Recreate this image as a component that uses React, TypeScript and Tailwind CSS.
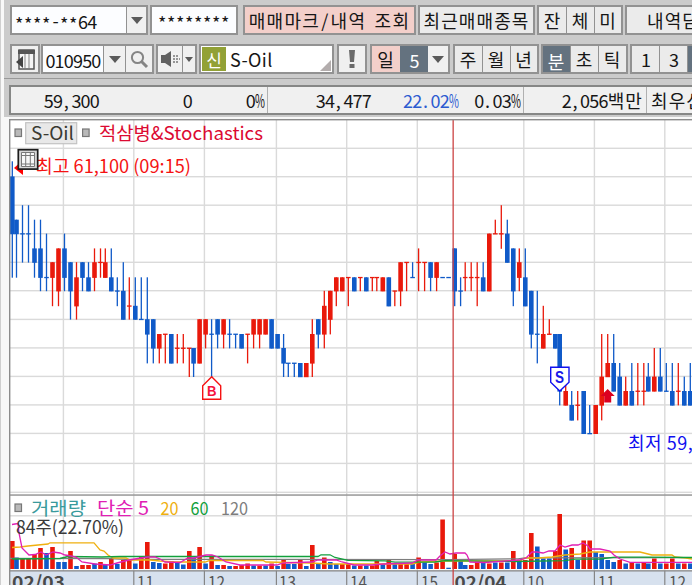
import type { ReactNode } from 'react';

type Tone = 'r' | 'b';

// x, tone, high, body top, body bottom, low (price steps), volume tone, volume height
type Bar = [number, Tone, number, number, number, number, Tone, number];

const BARS: Bar[] = [
  [12.3, 'b', 0, 1, 5, 8, 'r', 28], [16.5, 'b', 4, 4, 5, 8, 'b', 11.5], [22.5, 'b', 3, 5, 5, 7, 'r', 11],
  [28.5, 'b', 3, 5, 5, 7, 'r', 11], [34.5, 'b', 4, 6, 7, 8, 'r', 15], [40.5, 'b', 4, 6, 8, 9, 'r', 21],
  [46.5, 'b', 5, 8, 8, 9, 'b', 16], [52.5, 'r', 7, 7, 8, 10, 'r', 22], [58.5, 'r', 6, 6, 9, 10, 'b', 7],
  [64.5, 'b', 5, 6, 8, 9, 'b', 7], [70.5, 'b', 7, 7, 9, 11, 'r', 18], [76.5, 'r', 7, 8, 10, 11, 'b', 3],
  [82.5, 'b', 7, 7, 8, 9, 'r', 4], [88.5, 'b', 7, 8, 9, 9, 'r', 4], [94.5, 'r', 6, 7, 8, 9, 'b', 5.5],
  [100.5, 'r', 6, 7, 7, 8, 'r', 7], [105.3, 'r', 6, 7, 8, 8, 'b', 4], [111.3, 'b', 6, 8, 9, 9, 'r', 11],
  [117.3, 'b', 8, 9, 9, 10, 'b', 5], [123.3, 'b', 7, 9, 11, 11, 'r', 9], [129.3, 'r', 8, 10, 10, 11, 'r', 9],
  [135.3, 'b', 8, 10, 11, 11, 'b', 5.5], [141.3, 'b', 8, 11, 11, 11, 'r', 12], [147.3, 'b', 8, 11, 12, 14, 'r', 27],
  [153.3, 'b', 11, 11, 13, 14, 'b', 7], [159.3, 'r', 12, 12, 13, 14, 'b', 6], [165.3, 'r', 12, 12, 12, 14, 'r', 5.5],
  [171.3, 'b', 12, 12, 14, 14, 'r', 8], [177.3, 'r', 12, 13, 13, 14, 'b', 6], [183.3, 'r', 12, 13, 13, 14, 'b', 4.5],
  [189.3, 'r', 13, 13, 13, 15, 'r', 18], [193.6, 'b', 13, 13, 14, 15, 'b', 11.5], [199.6, 'r', 11, 11, 14, 14, 'r', 22],
  [205.6, 'r', 11, 11, 12, 13, 'b', 5.5], [211.6, 'b', 11, 12, 12, 15, 'r', 13.5], [217.6, 'b', 11, 11, 12, 13, 'b', 4],
  [223.6, 'r', 11, 11, 12, 13, 'r', 4], [229.6, 'b', 11, 12, 12, 13, 'b', 3], [235.6, 'b', 12, 12, 12, 13, 'r', 3],
  [241.6, 'b', 12, 12, 13, 13, 'r', 4], [247.6, 'r', 12, 12, 12, 14, 'r', 5.5], [253.6, 'r', 11, 11, 12, 13, 'b', 3.5],
  [259.6, 'r', 11, 11, 12, 13, 'r', 3.5], [265.6, 'r', 11, 11, 12, 12, 'b', 3.5], [271.6, 'b', 11, 11, 13, 13, 'r', 5.5],
  [277.6, 'b', 12, 12, 13, 13, 'b', 3], [283.6, 'b', 12, 13, 14, 15, 'r', 9], [288.3, 'b', 14, 14, 14, 15, 'b', 5],
  [294.3, 'b', 14, 14, 14, 15, 'b', 5], [300.3, 'b', 14, 14, 15, 15, 'r', 9], [306.3, 'r', 14, 14, 15, 15, 'b', 3],
  [312.3, 'r', 11, 12, 14, 15, 'r', 24], [318.3, 'b', 11, 11, 12, 13, 'b', 5], [324.3, 'r', 9, 10, 12, 13, 'r', 11.5],
  [330.3, 'r', 9, 9, 11, 12, 'b', 7], [336.3, 'r', 8, 8, 9, 10, 'b', 5], [342.3, 'r', 8, 8, 9, 9, 'r', 5],
  [348.3, 'r', 8, 8, 8, 10, 'r', 5], [354.3, 'b', 8, 8, 9, 9, 'b', 3.5], [360.3, 'r', 8, 8, 8, 9, 'r', 3.5],
  [366.3, 'b', 8, 8, 9, 9, 'b', 3.5], [372.3, 'r', 8, 8, 8, 9, 'r', 3.5], [376.8, 'r', 8, 8, 8, 9, 'r', 8],
  [382.8, 'r', 8, 8, 9, 9, 'b', 5], [388.8, 'b', 8, 8, 10, 10, 'r', 9], [394.8, 'r', 9, 9, 9, 10, 'b', 5],
  [400.6, 'r', 7, 7, 9, 10, 'r', 5], [406.6, 'r', 7, 7, 7, 9, 'r', 5], [412.6, 'b', 7, 8, 8, 8, 'b', 5.5],
  [418.6, 'r', 6, 7, 7, 9, 'r', 11.5], [424.6, 'r', 7, 7, 7, 9, 'b', 6.5], [430.6, 'b', 7, 7, 8, 9, 'b', 5],
  [436.6, 'r', 7, 7, 8, 9, 'r', 6.5], [442.6, 'b', 8, 8, 8, 8, 'r', 49.5], [448.6, 'b', 8, 8, 8, 8, 'b', 1.3],
  [454.7, 'b', 6, 6, 9, 10, 'r', 15], [460.6, 'b', 8, 9, 9, 10, 'b', 8], [465.2, 'r', 7, 8, 8, 9, 'b', 4],
  [471.2, 'r', 7, 8, 8, 9, 'r', 4], [477.2, 'r', 7, 8, 8, 10, 'r', 7.5], [483.2, 'b', 7, 8, 9, 9, 'b', 6.5],
  [489.3, 'r', 5, 5, 9, 9, 'r', 5.5], [495.3, 'r', 4, 5, 5, 5, 'b', 6.5], [501.3, 'r', 3, 5, 5, 6, 'r', 6.5],
  [507.3, 'b', 4, 5, 7, 7, 'b', 6.5], [513.3, 'b', 6, 6, 9, 10, 'r', 18], [519.3, 'r', 6, 7, 8, 9, 'b', 9],
  [525.3, 'b', 6, 8, 10, 10, 'r', 9], [531.3, 'b', 9, 9, 12, 13, 'r', 36], [537.3, 'b', 9, 12, 12, 14, 'b', 22.5],
  [543.3, 'r', 10, 12, 13, 13, 'b', 10.5], [549.3, 'r', 11, 12, 12, 12, 'b', 10.5], [555.3, 'b', 12, 12, 13, 13, 'r', 18],
  [559.7, 'b', 12, 12, 16, 17, 'r', 55], [565.7, 'r', 15, 16, 17, 17, 'b', 19.5], [571.7, 'b', 16, 17, 18, 18, 'r', 21],
  [577.7, 'r', 16, 17, 17, 18, 'b', 9], [583.7, 'b', 16, 16, 19, 19, 'r', 28.5], [589.7, 'b', 17, 19, 19, 19, 'r', 28.5],
  [595.7, 'r', 17, 17, 19, 19, 'b', 17], [601.7, 'r', 12, 15, 17, 18, 'b', 15], [607.7, 'r', 12, 14, 15, 15, 'b', 9],
  [613.7, 'b', 12, 14, 16, 16, 'b', 7], [619.7, 'b', 14, 15, 17, 17, 'r', 9], [625.7, 'r', 15, 16, 17, 17, 'b', 5.5],
  [631.8, 'b', 14, 16, 17, 17, 'r', 6.5], [637.8, 'r', 14, 16, 16, 17, 'b', 5.5], [643.8, 'r', 14, 16, 16, 17, 'r', 6.5],
  [648.3, 'b', 14, 15, 16, 16, 'b', 5.5], [654.3, 'r', 13, 15, 16, 16, 'r', 10.5], [660.3, 'b', 13, 15, 16, 16, 'b', 5.5],
  [666.3, 'b', 14, 16, 16, 16, 'r', 5.5], [672.3, 'b', 14, 16, 17, 17, 'r', 10.5], [678.3, 'r', 14, 16, 16, 17, 'b', 5.5],
  [684.3, 'b', 15, 16, 17, 17, 'r', 5.5], [690.3, 'b', 14, 16, 17, 17, 'b', 5.5],
];

const LEVELS = [
  161.3, 176.4, 191, 205.2, 219.7, 233.6, 248.4, 262.2, 277.3, 290.8,
  305.8, 319.2, 334, 348, 363, 376.6, 391, 405, 420, 433.4,
];

const GRID_Y = [148.3, 176.7, 205.2, 233.7, 262.3, 290.7, 319.4, 347.9, 376.4, 404.9, 433.4, 463.4, 492.3, 515.8];
const GRID_X = [63.4, 133.8, 204.4, 276.4, 346.7, 417.3, 523.8, 594.4, 664.8];

const FILL = { r: '#e9190b', b: '#105ac8' };

const MA = [
  {
    color: '#7d7d7d',
    points: '10,558.3 110,558.6 125,559.3 450,559.6 518,558.8 525,557.8 692,557.6',
  },
  {
    color: '#efb010',
    points: '12,547.5 20,547 28,546 38,545 48,544 50,542.8 94,542.8 100,550 104,551 108,555 113,558 126,558 130,560 150,560 160,561 175,562 205,562 210,560.5 263,560.5 266,562 310,563 330,564 412,564 420,562 445,561 520,561 525,558 538,558 552,557 565,555 580,554 590,552 640,552 652,555 672,555 675,557 686,558 692,559',
  },
  {
    color: '#12a03c',
    points: '12,559 60,558.5 68,556.5 102,557 120,556.5 318,556.5 321,554.8 330,554.8 335,557.5 348,560.3 385,560.8 395,562.2 435,562 445,560.6 515,561.5 565,560.6 575,559.2 600,559 615,557.2 628,557.2 645,557.2 692,557.5',
  },
  {
    color: '#e020b4',
    points: '12,524.5 15,524 18,523.5 19,533 22,548 25,551 29,555 35,554.5 41,552 46,555 53,552 60,553 65,555 71,556 76,557 82,562 95,564 110,565 117,563 129,560 141,558 148,557 155,557 160,559 165,562 180,562.5 188,558 194,558 200,556.5 206,555 212,555 218,557 226,562 240,565 277,565 283,563 312,562 318,560 336,560 342,562 354,565 372,565 383,564 412,563 418,560 436,560 440,556 445,552 450,554 456,553 465,553 467,555 470,562 485,562.5 519,560 526,558 532,552 537,552 543,553 549,551 555,551 560,545 565,547 572,545 578,545 583,543 588,546 590,549 600,549 610,551 614,555 620,559 630,562.3 692,562.3',
  },
];

const HOURS = [
  { x: 137, label: '11' },
  { x: 208, label: '12' },
  { x: 279, label: '13' },
  { x: 350, label: '14' },
  { x: 421, label: '15' },
  { x: 527, label: '10' },
  { x: 598, label: '11' },
  { x: 669, label: '12' },
];

// Every character takes about 9px: punctuation is padded and the percent sign is narrowed
function Num({ children, className = '' }: { children: string; className?: string }) {
  return (
    <span className={`text-[18px] tracking-[-0.8px] whitespace-pre ${className}`}>
      {children.split(/([.,%])/).map((part, i) => {
        if (part === '%') {
          return <span key={i} className="inline-block w-[9px] origin-left scale-x-[0.6]">%</span>;
        }
        return i % 2 ? <span key={i} className="mr-[3.5px] ml-[1.5px]">{part}</span> : part;
      })}
    </span>
  );
}

function Kor({ children, className = '' }: { children: ReactNode; className?: string }) {
  return <span className={`text-[18px] tracking-[1.1px] whitespace-pre [word-spacing:3px] ${className}`}>{children}</span>;
}

function Box({ children, className = '' }: { children?: ReactNode; className?: string }) {
  return (
    <div className={`flex h-[30px] shrink-0 items-stretch border-2 border-[#929292] bg-[#ebebeb] ${className}`}>
      {children}
    </div>
  );
}

function Cell({ children, className = '' }: { children?: ReactNode; className?: string }) {
  return <div className={`flex shrink-0 items-center justify-center ${className}`}>{children}</div>;
}

function Arrow({ small = false }: { small?: boolean }) {
  return small ? (
    <svg width="8" height="5" viewBox="0 0 8 5"><path d="M0 0h8L4 5z" fill="#5a5a5a" /></svg>
  ) : (
    <svg width="12" height="7" viewBox="0 0 12 7"><path d="M0 0h12L6 7z" fill="#5a5a5a" /></svg>
  );
}

function TopRow() {
  return (
    <div className="flex h-[30px]">
      <Box className="w-[138px] bg-[#fcfdff]">
        <Cell className="w-[114px] justify-start pl-[3px]">
          <span className="pt-[6px] text-[18px] tracking-[0.6px]">****</span>
          <span className="w-[9px] pb-px text-center text-[18px]">-</span>
          <span className="pt-[6px] text-[18px] tracking-[0.6px]">**</span>
          <Num className="pt-px">64</Num>
        </Cell>
        <Cell className="w-[20px] border-l border-[#929292] bg-[#f0f0f0]"><Arrow /></Cell>
      </Box>
      <Box className="ml-[2px] w-[88px] border-[#7c8488] bg-[#fcfdff]">
        <Cell className="flex-1"><span className="pt-[4px] text-[18px] tracking-[0.6px]">********</span></Cell>
      </Box>
      <Box className="ml-[5px] w-[173px] bg-[#f3cfca]">
        <Cell className="flex-1"><Kor className="tracking-[1.3px]">매매마크<span className="mx-[1px]">/</span>내역 조회</Kor></Cell>
      </Box>
      <Box className="ml-[2px] w-[117px]">
        <Cell className="flex-1"><Kor>최근매매종목</Kor></Cell>
      </Box>
      <Box className="ml-[2px] w-[86px]">
        <Cell className="w-[27px]"><Kor>잔</Kor></Cell>
        <Cell className="w-[28px] border-l border-[#929292]"><Kor>체</Kor></Cell>
        <Cell className="flex-1 border-l border-[#929292]"><Kor>미</Kor></Cell>
      </Box>
      <Box className="ml-[2px] w-[100px]">
        <Cell className="flex-1 justify-start pl-[20px]"><Kor>내역담기</Kor></Cell>
      </Box>
    </div>
  );
}

function ToolRow() {
  return (
    <div className="mt-[9px] flex h-[30px]">
      <Box className="w-[30px] bg-[#f0f0f0]">
        <Cell className="flex-1">
          <svg width="19" height="21" viewBox="0 0 19 21">
            <path d="M3 1h15v19H3z" fill="#f5f5f5" stroke="#555" strokeWidth="1.5" />
            <path d="M2 1h17v4H2z" fill="#555" />
            <path d="M9 5v14M13 5v14" stroke="#999" strokeWidth="1.2" />
            <path d="M0 13l7-6v12z" fill="#444" />
          </svg>
        </Cell>
      </Box>
      <Box className="ml-[1px] w-[113px] bg-[#fcfdff]">
        <Cell className="w-[60px] pt-px"><Num>010950</Num></Cell>
        <Cell className="w-[22px] border-l border-[#929292] bg-[#f0f0f0]"><Arrow /></Cell>
        <Cell className="flex-1 border-l border-[#929292] bg-[#f0f0f0]">
          <svg width="19" height="19" viewBox="0 0 19 19" fill="none" stroke="#858585">
            <circle cx="7.5" cy="7.5" r="5.6" strokeWidth="2" />
            <path d="M11.5 11.5l5.5 5.5" strokeWidth="3" />
          </svg>
        </Cell>
      </Box>
      <Box className="ml-[2px] w-[41px] bg-[#f0f0f0]">
        <Cell className="w-[24px]">
          <svg width="19" height="16" viewBox="0 0 19 16">
            <path d="M0 4h4l6-4v16l-6-4H0z" fill="#616161" />
            <path d="M12 5h2m1 0h2M12 8h2m1 0h2m1 0h1M12 11h2m1 0h2" stroke="#777" strokeWidth="1.5" />
          </svg>
        </Cell>
        <Cell className="flex-1 border-l border-[#929292]"><Arrow small /></Cell>
      </Box>
      <Box className="relative ml-[2px] w-[135px] bg-white">
        <Cell className="mt-[1px] ml-[1px] h-[24px] w-[24px] bg-[#92a136]">
          <span className="text-[17px] text-white">신</span>
        </Cell>
        <Cell className="ml-[4px]"><Num className="pb-px tracking-[0.4px]">S-Oil</Num></Cell>
        <svg className="absolute right-[1px] bottom-[1px]" width="11" height="11" viewBox="0 0 11 11">
          <path d="M11 0v11H0z" fill="#b3adad" />
        </svg>
      </Box>
      <Box className="ml-[3px] w-[30px] bg-[#f0f0f0]">
        <Cell className="flex-1">
          <svg width="6" height="18" viewBox="0 0 6 18">
            <path d="M0 0h6l-1 12H1zM.5 14h5v4h-5z" fill="#6a6a6a" />
          </svg>
        </Cell>
      </Box>
      <Box className="ml-[3px] w-[80px]">
        <Cell className="w-[28px] bg-[#f3cfca]"><Kor>일</Kor></Cell>
        <Cell className="w-[28px] bg-[#64727f] pt-[2px]"><Num className="text-white">5</Num></Cell>
        <Cell className="flex-1 bg-[#f0f0f0]"><Arrow /></Cell>
      </Box>
      <Box className="ml-[3px] w-[86px]">
        <Cell className="w-[27px]"><Kor>주</Kor></Cell>
        <Cell className="w-[28px] border-l border-[#929292]"><Kor>월</Kor></Cell>
        <Cell className="flex-1 border-l border-[#929292]"><Kor>년</Kor></Cell>
      </Box>
      <Box className="ml-[2px] w-[87px]">
        <Cell className="w-[27px] bg-[#64727f] pt-[3px]"><Kor className="text-white">분</Kor></Cell>
        <Cell className="w-[28px] border-l border-[#929292]"><Kor>초</Kor></Cell>
        <Cell className="flex-1 border-l border-[#929292]"><Kor>틱</Kor></Cell>
      </Box>
      <Box className="ml-[2px] w-[90px]">
        <Cell className="w-[27px]"><Num>1</Num></Cell>
        <Cell className="w-[28px] border-l border-[#929292]"><Num>3</Num></Cell>
        <Cell className="flex-1 border-l border-[#929292] bg-[#64727f]" />
      </Box>
    </div>
  );
}

function QuoteBar() {
  return (
    <div className="ml-[9px] flex h-[30px] w-[720px] items-stretch border-2 border-[#868786] bg-[#f0f0f0]">
      <Cell className="w-[88px] justify-end"><Num>59,300</Num></Cell>
      <Cell className="w-[93px] justify-end"><Num>0</Num></Cell>
      <Cell className="w-[76px] justify-end border-r border-[#b0b0b0] pr-[3px]"><Num>0%</Num></Cell>
      <Cell className="w-[103px] justify-end"><Num>34,477</Num></Cell>
      <Cell className="w-[87px] justify-end"><Num className="text-[#2c5bd0]">22.02%</Num></Cell>
      <Cell className="w-[66px] justify-end border-r border-[#b0b0b0] pr-[3px]"><Num>0.03%</Num></Cell>
      <Cell className="w-[123px] justify-end border-r border-[#b0b0b0] pr-[3px]"><Num>2,056</Num><Kor>백만</Kor></Cell>
      <Cell className="pl-[4px]"><Kor>최우선</Kor></Cell>
    </div>
  );
}

function Candle({ bar }: { bar: Bar }) {
  const [x, tone, high, top, bottom, low] = bar;
  const y = LEVELS[top];
  const height = top === bottom ? 1.3 : LEVELS[bottom] - y + 0.6;
  return (
    <g fill={FILL[tone]}>
      {high !== low && <rect x={x - 0.65} y={LEVELS[high]} width="1.3" height={LEVELS[low] - LEVELS[high] + 0.4} />}
      <rect x={x - 2.3} y={top === bottom ? y - 0.4 : y} width="4.6" height={height} />
    </g>
  );
}

function Chart() {
  return (
    <svg
      className="ml-[9px] block"
      width="683"
      height="466"
      viewBox="9 119 683 466"
      fontFamily="'Noto Sans CJK KR', sans-serif"
      fontSize="18"
    >
      <rect x="9" y="119" width="683" height="466" fill="#fff" />
      <g fill="#dadada">
        {GRID_Y.map((y) => <rect key={y} x="10" y={y - 0.7} width="682" height="1.4" />)}
        {GRID_X.map((x) => <rect key={x} x={x - 0.7} y="120" width="1.4" height="451" />)}
      </g>

      <rect x="10" y="571" width="682" height="14" fill="#d7e1ee" />
      <rect x="10" y="494.3" width="682" height="1.5" fill="#989898" />
      <rect x="10" y="570.2" width="682" height="1.3" fill="#858585" />
      {GRID_X.slice(1).map((x) => <rect key={x} x={x - 0.6} y="571" width="1.2" height="14" fill="#858585" />)}

      {BARS.map((bar) => <Candle key={bar[0]} bar={bar} />)}
      {BARS.map((bar) => (
        <rect key={bar[0]} x={bar[0] - 2.3} y={569 - bar[7]} width="4.6" height={bar[7]} fill={FILL[bar[6]]} />
      ))}
      {MA.map((line) => (
        <polyline key={line.color} points={line.points} fill="none" stroke={line.color} strokeWidth="1.3" />
      ))}

      <rect x="452.5" y="120" width="1.3" height="465" fill="#cc4444" />
      <rect x="9" y="119" width="683" height="1.4" fill="#8c8c8c" />
      <rect x="9" y="119" width="1.4" height="466" fill="#8c8c8c" />

      {/* indicator legend */}
      <g fill="#b9b9b9" stroke="#777" strokeWidth="1.2">
        <rect x="15" y="129" width="6.5" height="7.5" />
        <rect x="82.6" y="129" width="6.5" height="7.5" />
        <rect x="15" y="504" width="6.5" height="7.5" />
      </g>
      <rect x="25.7" y="122.7" width="51" height="21" fill="#e8e8e8" stroke="#c2c2c2" strokeWidth="1.2" />
      <text x="31" y="139.5" textLength="43" lengthAdjust="spacingAndGlyphs" fill="#3a3a32">S-Oil</text>
      <text x="99" y="139.5" textLength="164" lengthAdjust="spacingAndGlyphs" fill="#dc0a32">적삼병&amp;Stochastics</text>

      {/* high / low callouts */}
      <path d="M14 168l9-8v15z" fill="#f00" />
      <text x="36" y="172.5" textLength="155" lengthAdjust="spacingAndGlyphs" fill="#f51212">최고 61,100 (09:15)</text>
      <g>
        <rect x="18.3" y="149.7" width="19.4" height="19.4" fill="#d6d6d6" stroke="#1c1c1c" strokeWidth="1.7" />
        <path d="M21.5 152.5h13v14h-13zM21.5 155.5h13M21.5 164h13M25.7 152.5v14M30.3 152.5v14" fill="#f7f7f7" stroke="#777" strokeWidth="1" />
      </g>
      <text x="628" y="450" textLength="162" lengthAdjust="spacing" fill="#0f0ff0">최저 59,200 (10:50)</text>

      {/* trade marks */}
      <path d="M211.7 376.8l9 9v13.5h-18v-13.5z" fill="#fff" stroke="#f51212" strokeWidth="1.4" />
      <text x="211.8" y="396.3" textAnchor="middle" fontFamily="'Liberation Sans'" fontSize="15" fontWeight="bold" textLength="9.5" lengthAdjust="spacingAndGlyphs" fill="#f5123c">B</text>
      <path d="M550.7 367.3h18.3v15l-9.2 8.7-9.1-8.7z" fill="#fff" stroke="#1010f0" strokeWidth="1.4" />
      <text x="559.5" y="382.8" textAnchor="middle" fontFamily="'Liberation Sans'" fontSize="16" fontWeight="bold" textLength="9" lengthAdjust="spacingAndGlyphs" fill="#1818e8">S</text>
      <path d="M607.7 389l7 7h-3.5v6.5h-7V396h-3.5z" fill="#dc0020" />

      {/* volume legend */}
      <text x="31" y="514.5" textLength="55" lengthAdjust="spacingAndGlyphs" fill="#399a9c">거래량</text>
      <text x="97" y="514.5" textLength="52" lengthAdjust="spacingAndGlyphs" fill="#e020b4">단순 5</text>
      <text x="160.5" y="514.5" textLength="18" lengthAdjust="spacingAndGlyphs" fill="#efb010">20</text>
      <text x="190.5" y="514.5" textLength="18" lengthAdjust="spacingAndGlyphs" fill="#12a03c">60</text>
      <text x="221" y="514.5" textLength="27" lengthAdjust="spacingAndGlyphs" fill="#7d7d7d">120</text>
      <text x="16" y="533.5" textLength="108" lengthAdjust="spacingAndGlyphs" fill="#3a3a3a">84주(22.70%)</text>

      {/* time axis */}
      <text x="12" y="588.5" fontWeight="bold" textLength="53" lengthAdjust="spacingAndGlyphs" fill="#4a4a4a">02/03</text>
      <text x="454.5" y="588.5" fontWeight="bold" textLength="52" lengthAdjust="spacingAndGlyphs" fill="#4a4a4a">02/04</text>
      {HOURS.map((hour) => (
        <text key={hour.x} x={hour.x} y="588.5" textLength="17" lengthAdjust="spacingAndGlyphs" fill="#555">{hour.label}</text>
      ))}
    </svg>
  );
}

export default function App() {
  return (
    <div className="h-[585px] w-[692px] overflow-hidden border-l border-[#cfcfcf] bg-[#f8f8f8] font-['Noto_Sans_CJK_KR',sans-serif] leading-none text-[#161616]">
      <div className="-ml-px">
        <div className="ml-[4px] h-[79px] border-b border-[#999] bg-[#cbcbcb] pt-[5px] pl-[6px]">
          <TopRow />
          <ToolRow />
        </div>
        <div className="ml-[4px] h-[38px] bg-[#cbcbcb] pt-[6px]">
          <div className="-ml-[4px]">
            <QuoteBar />
          </div>
        </div>
        <div className="h-[2px]" />
        <Chart />
      </div>
    </div>
  );
}
